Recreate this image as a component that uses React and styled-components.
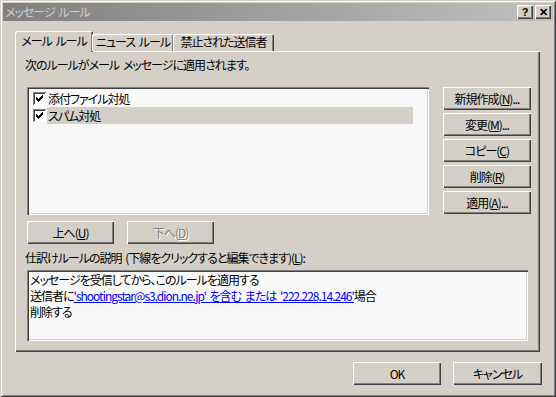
import React from 'react'
import styled, { createGlobalStyle } from 'styled-components'

const FACE = '#d4d0c8'
const FONT = `"Noto Sans CJK JP", "Noto Sans", sans-serif`

const GlobalStyle = createGlobalStyle`
  html, body {
    margin: 0;
    padding: 0;
    background: ${FACE};
  }
  * {
    box-sizing: border-box;
  }
`

const Window = styled.div`
  width: 556px;
  height: 397px;
  padding: 3px;
  background: ${FACE};
  font-family: ${FONT};
  font-size: 12px;
  font-feature-settings: "palt";
  letter-spacing: -1px;
  word-spacing: 2px;
  color: #000;
  box-shadow: inset 1px 1px 0 ${FACE}, inset -1px -1px 0 #404040,
    inset 2px 2px 0 #fff, inset -2px -2px 0 #808080;
  display: flex;
  flex-direction: column;
`

const TitleBar = styled.div`
  height: 18px;
  display: flex;
  align-items: center;
  padding: 0 2px 0 2px;
  background: linear-gradient(to right, #808080, #c0c0c0);
  color: ${FACE};
`

const Title = styled.span`
  flex: 1;
  line-height: 18px;
  white-space: nowrap;
`

const CaptionButton = styled.div`
  width: 16px;
  height: 14px;
  margin-left: ${p => p.$gap || 0}px;
  background: ${FACE};
  box-shadow: inset 1px 1px 0 #fff, inset -1px -1px 0 #404040,
    inset -2px -2px 0 #808080;
  display: flex;
  align-items: center;
  justify-content: center;
  color: #000;
  font-family: "Liberation Sans", sans-serif;
  font-weight: bold;
  font-size: 11px;
  letter-spacing: 0;
  line-height: 1;
`

const Body = styled.div`
  flex: 1;
  display: flex;
  flex-direction: column;
  padding: 11px 0 0 12px;
`

const TabStrip = styled.div`
  display: flex;
  align-items: flex-end;
  height: 20px;
  position: relative;
  z-index: 1;
  margin-bottom: -1px;
`

const Tab = styled.div`
  height: ${p => (p.$active ? 21 : 17)}px;
  width: ${p => p.$w}px;
  margin-left: ${p => (p.$active ? 0 : -1)}px;
  margin-bottom: ${p => (p.$active ? 0 : 1)}px;
  padding-top: ${p => (p.$active ? 3 : 1)}px;
  text-align: center;
  white-space: nowrap;
  background: ${FACE};
  border-top-left-radius: 2px;
  border-top-right-radius: 2px;
  box-shadow: inset 1px 1px 0 #fff, inset -1px 0 0 #404040,
    inset -2px 0 0 #808080;
  line-height: 14px;
`

const Panel = styled.div`
  width: 525px;
  height: 301px;
  padding: 7px 0 0 10px;
  background: ${FACE};
  box-shadow: inset 1px 1px 0 #fff, inset -1px -1px 0 #404040,
    inset -2px -2px 0 #808080;
  display: flex;
  flex-direction: column;
`

const Label = styled.div`
  line-height: 14px;
  height: 14px;
  white-space: nowrap;
  margin-top: ${p => p.$mt || 0}px;
`

const ListRow = styled.div`
  display: flex;
  margin-top: ${p => p.$mt ?? 15}px;
  margin-left: 2px;
`

const Sunken = styled.div`
  width: ${p => p.$w}px;
  height: ${p => p.$h}px;
  background: #f8f8f8;
  box-shadow: inset 1px 1px 0 #808080, inset 2px 2px 0 #404040,
    inset -1px -1px 0 #fff, inset -2px -2px 0 ${FACE};
  padding: ${p => p.$pad};
`

const Item = styled.div`
  display: flex;
  align-items: center;
  height: 17px;
`

const ItemText = styled.span`
  width: 366px;
  height: 17px;
  line-height: 17px;
  padding-left: 1px;
  background: ${p => (p.$selected ? FACE : 'transparent')};
`

const CheckBox = styled.svg`
  width: 13px;
  height: 13px;
  margin: 0 1px 0 4px;
  flex: none;
`

const ButtonColumn = styled.div`
  display: flex;
  flex-direction: column;
  gap: 3px;
  margin-left: 14px;
`

const Button = styled.div`
  width: ${p => p.$w || 88}px;
  height: 23px;
  background: ${FACE};
  box-shadow: inset 1px 1px 0 #fff, inset -1px -1px 0 #404040,
    inset -2px -2px 0 #808080;
  display: flex;
  align-items: center;
  justify-content: center;
  white-space: nowrap;
  padding-bottom: 1px;
  color: ${p => (p.$disabled ? '#808080' : '#000')};
  text-shadow: ${p => (p.$disabled ? '1px 1px 0 #fff' : 'none')};
`

const MoveRow = styled.div`
  display: flex;
  gap: 13px;
  margin: 6px 0 0 2px;
`

const DescText = styled.div`
  line-height: 16px;
  white-space: nowrap;
`

const Link = styled.span`
  color: #0000ff;
  text-decoration: underline;
`

const Footer = styled.div`
  display: flex;
  justify-content: flex-end;
  gap: 12px;
  margin-top: 10px;
  padding-right: 11px;
`

// classic 7x7 check mark, each column a 3px tall run
const checkCols = [2, 3, 4, 3, 2, 1, 0]

const Check = () => (
  <CheckBox viewBox="0 0 13 13" shapeRendering="crispEdges">
    <rect x="0" y="0" width="13" height="13" fill="#808080" />
    <rect x="1" y="1" width="12" height="12" fill="#fff" />
    <rect x="1" y="1" width="11" height="11" fill="#404040" />
    <rect x="2" y="2" width="10" height="10" fill="#fff" />
    {checkCols.map((top, i) => (
      <rect key={i} x={3 + i} y={3 + top} width="1" height="3" fill="#000" />
    ))}
  </CheckBox>
)

const sideButtons = [
  ['新規作成(', 'N', ')...'],
  ['変更(', 'M', ')...'],
  ['コピー(', 'C', ')'],
  ['削除(', 'R', ')'],
  ['適用(', 'A', ')...'],
]

export default function App() {
  return (
    <>
      <GlobalStyle />
      <Window>
        <TitleBar>
          <Title>メッセージ ルール</Title>
          <CaptionButton>?</CaptionButton>
          <CaptionButton $gap={2}>✕</CaptionButton>
        </TitleBar>
        <Body>
          <TabStrip>
            <Tab $active $w={78}>メール ルール</Tab>
            <Tab $w={82}>ニュース ルール</Tab>
            <Tab $w={101}>禁止された送信者</Tab>
          </TabStrip>
          <Panel>
            <Label>次のルールがメール メッセージに適用されます。</Label>
            <ListRow>
              <Sunken $w={402} $h={128} $pad="3px 2px 2px 2px">
                <Item>
                  <Check />
                  <ItemText>添付ファイル対処</ItemText>
                </Item>
                <Item>
                  <Check />
                  <ItemText $selected>スパム対処</ItemText>
                </Item>
              </Sunken>
              <ButtonColumn>
                {sideButtons.map(([a, k, b]) => (
                  <Button key={k}>
                    {a}<u>{k}</u>{b}
                  </Button>
                ))}
              </ButtonColumn>
            </ListRow>
            <MoveRow>
              <Button $w={87}>上へ(<u>U</u>)</Button>
              <Button $w={87} $disabled>下へ(<u>D</u>)</Button>
            </MoveRow>
            <Label $mt={7}>
              仕訳けルールの説明 (下線をクリックすると編集できます)(<u>L</u>):
            </Label>
            <ListRow $mt={5}>
              <Sunken $w={501} $h={71} $pad="2px 3px">
                <DescText>メッセージを受信してから、このルールを適用する</DescText>
                <DescText>
                  送信者に<Link>'shootingstar@s3.dion.ne.jp' を含む または '222.228.14.246'</Link>場合
                </DescText>
                <DescText>削除する</DescText>
              </Sunken>
            </ListRow>
          </Panel>
          <Footer>
            <Button $w={88}>OK</Button>
            <Button $w={89}>キャンセル</Button>
          </Footer>
        </Body>
      </Window>
    </>
  )
}
